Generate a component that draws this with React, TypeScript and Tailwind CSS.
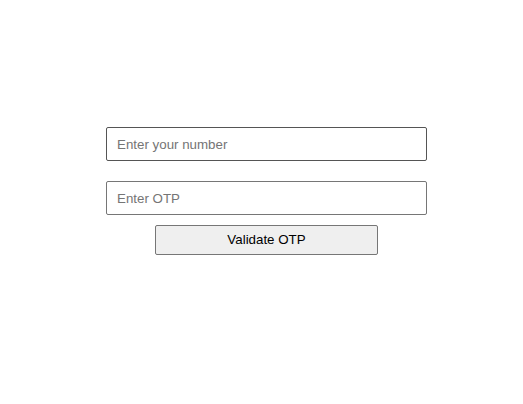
export default function App() {
  return (
    <div className="min-h-[404px] w-full bg-white pt-[127px] pl-[106px] font-['Liberation_Sans',Arial,sans-serif]">
      <div className="flex w-[321px] flex-col items-center">
        <input
          type="text"
          placeholder="Enter your number"
          className="h-[34px] w-full rounded-[2px] border border-[#555555] bg-white px-[10px] text-[13.333px] text-black outline-none placeholder:text-[#757575]"
        />
        <input
          type="text"
          placeholder="Enter OTP"
          className="mt-[20px] h-[34px] w-full rounded-[2px] border border-[#767676] bg-white px-[10px] text-[13.333px] text-black outline-none placeholder:text-[#757575]"
        />
        <button className="mt-[10px] h-[30px] w-[223px] rounded-[2px] border border-[#767676] bg-[#efefef] text-[13.333px] text-black">
          Validate OTP
        </button>
      </div>
    </div>
  );
}
